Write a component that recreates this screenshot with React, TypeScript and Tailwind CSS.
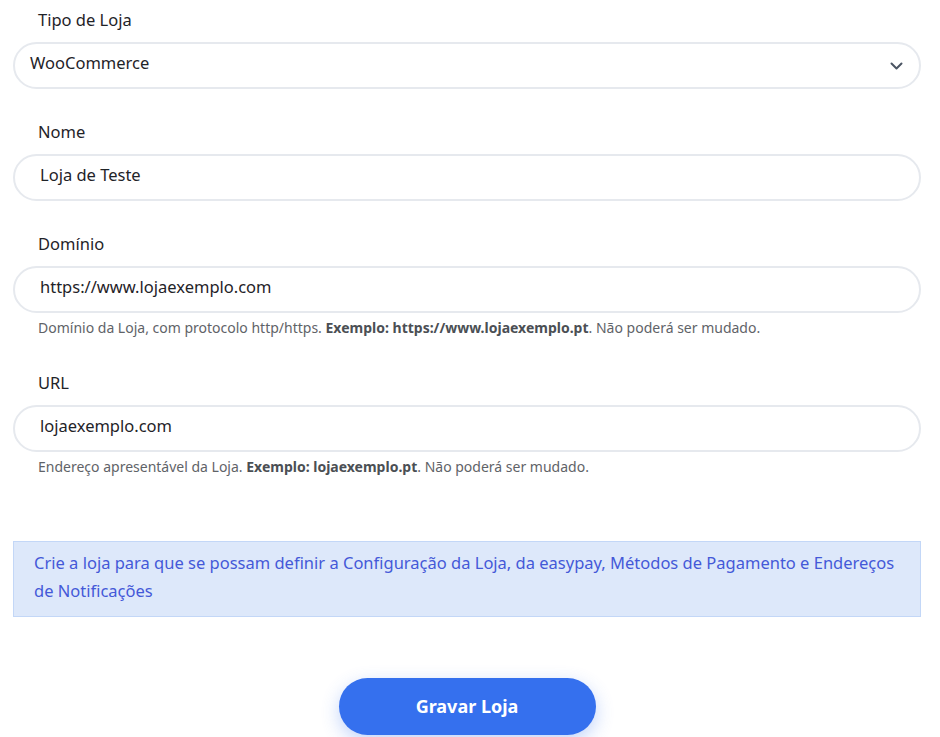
import React from 'react';

const font = { fontFamily: '"Noto Sans", "Open Sans", sans-serif' };

const Label: React.FC<{ children: React.ReactNode }> = ({ children }) => (
  <label className="block pl-[25px] text-[16.5px] leading-6 text-[#1f2328] mb-[10px]">{children}</label>
);

const TextInput: React.FC<{ value: string }> = ({ value }) => (
  <div className="h-[47px] rounded-full border-2 border-[#e6e9ee] bg-white flex items-center pl-[25px] pb-1 text-[16.5px] text-[#1f2328]">
    {value}
  </div>
);

const Help: React.FC<{ children: React.ReactNode }> = ({ children }) => (
  <p className="pl-[25px] mt-[5px] text-[14px] leading-5 text-[#5f6368]">{children}</p>
);

export default function App() {
  return (
    <div className="w-[940px] h-[737px] bg-white overflow-hidden pt-2" style={font}>
      <div className="ml-[13px] mr-[19px]">
        <Label>Tipo de Loja</Label>
        <div className="h-[47px] rounded-full border-2 border-[#e6e9ee] bg-white flex items-center justify-between pl-[15px] pr-[16px] pb-1 text-[16.5px] text-[#1f2328]">
          <span>WooCommerce</span>
          <svg width="13" height="8" viewBox="0 0 13 8" fill="none" stroke="#4b5563" strokeWidth="2" strokeLinecap="round" strokeLinejoin="round" className="mt-1">
            <path d="M1.5 1.5l5 5 5-5" />
          </svg>
        </div>

        <div className="mt-[31px]">
          <Label>Nome</Label>
          <TextInput value="Loja de Teste" />
        </div>

        <div className="mt-[31px]">
          <Label>Domínio</Label>
          <TextInput value="https://www.lojaexemplo.com" />
          <Help>
            Domínio da Loja, com protocolo http/https. <b className="font-bold text-[#4b4f54]">Exemplo: https://www.lojaexemplo.pt</b>. Não poderá ser mudado.
          </Help>
        </div>

        <div className="mt-[33px]">
          <Label>URL</Label>
          <TextInput value="lojaexemplo.com" />
          <Help>
            Endereço apresentável da Loja. <b className="font-bold text-[#4b4f54]">Exemplo: lojaexemplo.pt</b>. Não poderá ser mudado.
          </Help>
        </div>

        <div className="mt-[64px] border border-[#c3d7f7] bg-[#dde8fa] pl-[20px] pr-[16px] pt-[7px] pb-[11px] text-[16.5px] leading-[28px] text-[#4459d8]">
          Crie a loja para que se possam definir a Configuração da Loja, da easypay, Métodos de Pagamento e Endereços de Notificações
        </div>

        <div className="flex justify-center mt-[61px]">
          <button className="w-[257px] h-[57px] rounded-full bg-[#3570ee] text-white text-[18px] font-bold shadow-[0_6px_18px_rgba(53,112,238,0.3)]">
            Gravar Loja
          </button>
        </div>
      </div>
    </div>
  );
}
